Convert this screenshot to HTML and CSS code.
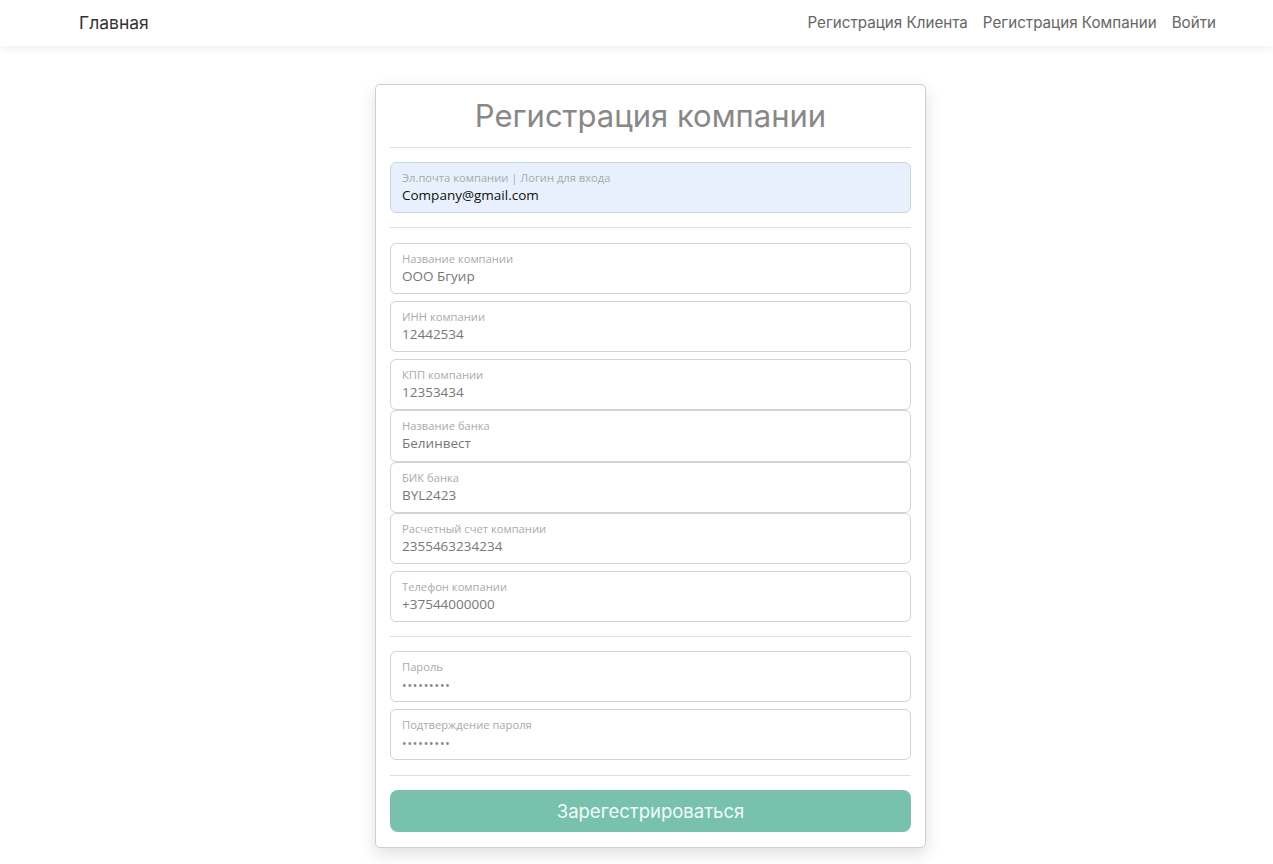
FILE: index.html
```html
<!DOCTYPE html>
<html lang="ru">
<head>
<meta charset="utf-8">
<title>Регистрация компании</title>
<link rel="stylesheet" href="styles.css">
</head>
<body>
<header class="navbar">
  <a class="brand" href="#">Главная</a>
  <nav class="nav">
    <a href="#">Регистрация Клиента</a>
    <a href="#">Регистрация Компании</a>
    <a href="#">Войти</a>
  </nav>
</header>
<main class="page">
  <form class="card">
    <h1 class="title">Регистрация компании</h1>
    <hr class="sep">
    <div class="field autofill"><span class="label">Эл.почта компании | Логин для входа</span><span class="value dark">Company@gmail.com</span></div>
    <hr class="sep sep-after">
    <div class="group">
      <div class="field"><span class="label">Название компании</span><span class="value">ООО Бгуир</span></div>
      <div class="field"><span class="label">ИНН компании</span><span class="value">12442534</span></div>
      <div class="tight">
        <div class="field"><span class="label">КПП компании</span><span class="value">12353434</span></div>
        <div class="field tall"><span class="label">Название банка</span><span class="value">Белинвест</span></div>
        <div class="field"><span class="label">БИК банка</span><span class="value">BYL2423</span></div>
        <div class="field"><span class="label">Расчетный счет компании</span><span class="value">2355463234234</span></div>
      </div>
      <div class="field"><span class="label">Телефон компании</span><span class="value">+37544000000</span></div>
    </div>
    <hr class="sep">
    <div class="group">
      <div class="field"><span class="label">Пароль</span><span class="value dots">•••••••••</span></div>
      <div class="field"><span class="label">Подтверждение пароля</span><span class="value dots">•••••••••</span></div>
    </div>
    <hr class="sep sep-before">
    <button class="btn" type="button">Зарегестрироваться</button>
  </form>
</main>
</body>
</html>
```
FILE: styles.css
```css
* { box-sizing: border-box; }
html, body { margin: 0; padding: 0; background: #fff; }
body { font-family: "Inter", "DejaVu Sans", sans-serif; }

.navbar {
  height: 46px;
  display: flex;
  align-items: center;
  justify-content: space-between;
  padding: 0 57px 2px 79px;
  background: #fff;
  box-shadow: 0 2px 10px rgba(0,0,0,0.07);
  position: relative;
}
.brand {
  color: #333;
  text-decoration: none;
  font-size: 17.5px;
  font-weight: 400;
}
.nav { display: flex; gap: 15px; }
.nav a {
  color: #666;
  text-decoration: none;
  font-size: 15.2px;
}

.page {
  display: flex;
  justify-content: center;
  padding: 38px 0 20px 28px;
}
.card {
  width: 551px;
  border: 1px solid #cfcfcf;
  border-radius: 5px;
  padding: 14px 14px 15px;
  background: #fff;
  box-shadow: 0 6px 16px rgba(0,0,0,0.13);
  display: flex;
  flex-direction: column;
}
.title {
  margin: 0;
  height: 34px;
  line-height: 34px;
  text-align: center;
  font-weight: 400;
  font-size: 31px;
  color: #888;
}
.sep {
  border: 0;
  border-top: 1px solid #dedede;
  margin: 14px 0 14px;
}
.sep-after { margin-bottom: 15px; }
.sep-before { margin-top: 15px; }
.group { display: flex; flex-direction: column; gap: 7px; }
.tight { display: flex; flex-direction: column; gap: 0; }
.field {
  height: 51px;
  border: 1px solid #ced4da;
  border-radius: 6px;
  padding: 7px 11px 0;
  display: flex;
  flex-direction: column;
  font-family: "Open Sans", "Noto Sans", sans-serif;
}
.field.tall { height: 52px; }
.field.autofill { background: #e8f0fe; }
.label {
  font-size: 11.2px;
  line-height: 16px;
  color: #aaa;
}
.value {
  font-size: 13.5px;
  line-height: 19px;
  color: #777;
}
.value.dark { color: #111; }
.value.dots {
  font-size: 12px;
  letter-spacing: 0.9px;
  color: #7d8590;
  line-height: 21px;
}
.btn {
  height: 42px;
  border: 0;
  border-radius: 8px;
  background: #78c2ad;
  color: #f3fbf8;
  font-family: "Inter", "DejaVu Sans", sans-serif;
  font-size: 18.5px;
  margin-top: 0;
}
```
